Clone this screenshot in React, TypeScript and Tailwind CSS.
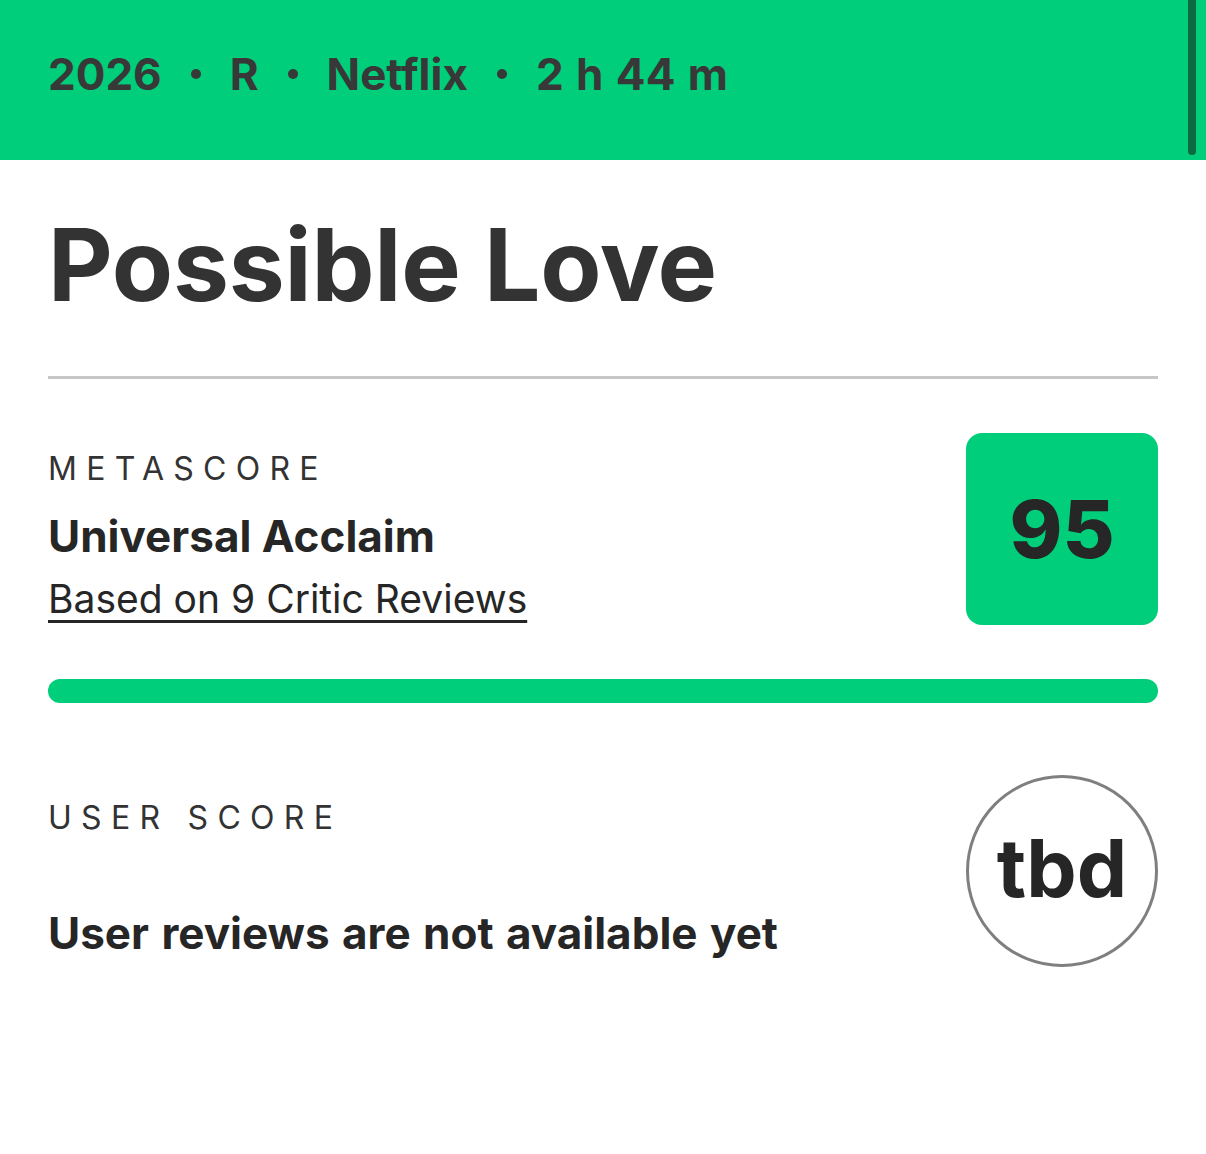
import React from "react";

const meta = ["2026", "R", "Netflix", "2 h 44 m"];

function Dot() {
  return <span className="mx-[29px] inline-block h-[10px] w-[10px] rounded-full bg-[#383838]" />;
}

export default function App() {
  return (
    <div className="min-h-[1154px] bg-white font-['Inter',sans-serif] text-[#333333]">
      {/* top strip with release info */}
      <div className="relative h-[160px] bg-[#00ce7a]">
        <div className="flex items-center pl-12 pt-[46px] text-[44px] font-bold leading-[56px] text-[#383838] [word-spacing:2px]">
          {meta.map((m, i) => (
            <React.Fragment key={m}>
              {i > 0 && <Dot />}
              <span>{m}</span>
            </React.Fragment>
          ))}
        </div>
        <div className="absolute right-[10px] top-0 h-[155px] w-[8px] rounded-b-full bg-[#0b6a40]" />
      </div>

      <div className="px-12">
        <h1 className="pt-[45px] text-[100px] font-bold leading-[120px] tracking-[-0.2px]">Possible Love</h1>
        <div className="mt-[51px] h-[3px] bg-[#c6c6c6]" />

        {/* critic score */}
        <div className="mt-[54px] flex items-start justify-between">
          <div className="pt-[16px]">
            <div className="text-[32px] font-normal leading-[40px] tracking-[0.29em]">METASCORE</div>
            <div className="mt-[21px] text-[44px] font-bold leading-[52px] text-[#262626]">Universal Acclaim</div>
            <a href="#" className="mt-[13px] block text-[39px] leading-[48px] text-[#262626] underline decoration-[3px] underline-offset-[7px]">
              Based on 9 Critic Reviews
            </a>
          </div>
          <div className="flex h-[192px] w-[192px] items-center justify-center rounded-[16px] bg-[#00ce7a] text-[80px] font-extrabold text-[#262626]">
            95
          </div>
        </div>
        <div className="mt-[54px] h-[24px] rounded-full bg-[#00ce7a]" />

        {/* user score */}
        <div className="mt-[72px] flex items-center justify-between">
          <div>
            <div className="pt-[14px] text-[32px] font-normal leading-[40px] tracking-[0.29em]">USER SCORE</div>
            <div className="mt-[69px] text-[44px] font-bold leading-[52px] text-[#262626] [word-spacing:2px]">
              User reviews are not available yet
            </div>
          </div>
          <div className="flex h-[192px] w-[192px] items-center justify-center rounded-full border-[3px] border-[#7f7f7f] text-[80px] font-bold text-[#262626]">
            <span className="-mt-[6px]">tbd</span>
          </div>
        </div>
      </div>
    </div>
  );
}
